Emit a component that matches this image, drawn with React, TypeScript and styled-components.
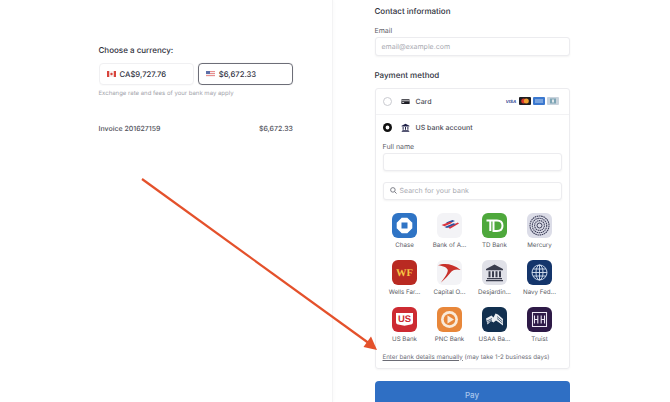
import React from "react";
import styled, { createGlobalStyle } from "styled-components";

const Global = createGlobalStyle`
  html, body { margin: 0; padding: 0; background: #fff; }
  body { font-family: Inter, "Liberation Sans", sans-serif; color: #30313d; text-rendering: geometricPrecision; }
  #root { width: 670px; height: 402px; overflow: hidden; }
`;

const Page = styled.div`
  position: relative;
  display: flex;
  width: 670px;
  height: 402px;
  overflow: hidden;
`;
const LeftPanel = styled.section`
  width: 333px;
  box-sizing: border-box;
  padding: 44px 39px 0 98.5px;
  border-right: 1px solid #f3f3f4;
  box-shadow: 1px 0 3px rgba(0, 0, 0, 0.025);
`;
const RightPanel = styled.section`
  width: 195px;
  margin-left: 41.5px;
  padding-top: 5px;
`;
const Heading = styled.h2`
  margin: 0;
  font-size: 8px;
  line-height: 12px;
  font-weight: 500;
  color: #30313d;
`;
const CurrencyRow = styled.div`
  display: flex;
  gap: 4px;
  margin-top: 7px;
`;
const CurrencyButton = styled.div<{ $active?: boolean }>`
  flex: 1;
  height: 22px;
  box-sizing: border-box;
  display: flex;
  align-items: center;
  gap: 4px;
  padding-left: 7px;
  border-radius: 4px;
  font-size: 7.7px;
  font-weight: 500;
  color: #30313d;
  border: 1px solid ${p => (p.$active ? "#6d6e78" : "#f0f0f2")};
  box-shadow: ${p => (p.$active ? "0 0 1px rgba(0,0,0,.2)" : "0 1px 1px rgba(0,0,0,.02)")};
`;
const Flag = styled.svg`
  width: 9px;
  height: 6px;
  flex: none;
`;
const Note = styled.p`
  margin: 4px 0 0;
  font-size: 6px;
  line-height: 10px;
  color: #a3a4ab;
`;
const InvoiceRow = styled.div`
  display: flex;
  justify-content: space-between;
  margin-top: 25px;
  font-size: 7px;
  line-height: 10px;
  font-weight: 500;
  color: #4f5059;
`;
const FieldLabel = styled.label`
  display: block;
  font-size: 7px;
  line-height: 10px;
  color: #5d5e68;
`;
const Input = styled.div`
  height: 18.5px;
  box-sizing: border-box;
  display: flex;
  align-items: center;
  gap: 3px;
  padding-left: 6px;
  margin-top: 1px;
  border: 1px solid #ececef;
  border-radius: 3px;
  background: #fff;
  box-shadow: 0 1px 2px rgba(0, 0, 0, 0.05);
  font-size: 7px;
  color: #a9aab1;
`;
const EmailGroup = styled.div`
  margin-top: 9px;
`;
const PaymentHeading = styled(Heading)`
  margin-top: 13.5px;
`;
const PaymentBox = styled.div`
  margin-top: 7px;
  height: 281px;
  box-sizing: border-box;
  border: 1px solid #ececef;
  border-radius: 3px;
  box-shadow: 0 1px 2px rgba(0, 0, 0, 0.04);
`;
const MethodRow = styled.div<{ $divided?: boolean }>`
  height: 25.5px;
  box-sizing: border-box;
  display: flex;
  align-items: center;
  padding: 0 10px 0 7px;
  font-size: 7px;
  font-weight: 500;
  color: #4a4b55;
  border-bottom: ${p => (p.$divided ? "1px solid #f2f2f4" : "none")};
`;
const Radio = styled.span<{ $on?: boolean }>`
  width: 9px;
  height: 9px;
  box-sizing: border-box;
  border-radius: 50%;
  flex: none;
  background: #fff;
  border: ${p => (p.$on ? "0" : "1px solid #c9cad0")};
  ${p => (p.$on ? "box-shadow: inset 0 0 0 2.6px #111;" : "")}
`;
const MethodIcon = styled.svg`
  width: 9px;
  height: 9px;
  margin-left: 9px;
  margin-right: 6px;
  flex: none;
`;
const CardLogos = styled.div`
  margin-left: auto;
  display: flex;
  gap: 2px;
  align-items: center;
`;
const CardLogo = styled.svg`
  width: 12px;
  height: 8px;
  display: block;
`;
const BankBody = styled.div`
  padding: 1.5px 7px 0;
`;
const SearchGroup = styled.div`
  margin-top: 10.5px;
`;
const Grid = styled.div`
  display: grid;
  grid-template-columns: repeat(4, 45px);
  justify-content: center;
  row-gap: 10px;
  margin-top: 13px;
`;
const Bank = styled.div`
  display: flex;
  flex-direction: column;
  align-items: center;
  gap: 3px;
  font-size: 6.2px;
  line-height: 9px;
  color: #5a5b64;
  white-space: nowrap;
`;
const Logo = styled.svg`
  width: 25px;
  height: 25px;
  display: block;
  border-radius: 6px;
`;
const Manual = styled.p`
  margin: 8.5px 0 0;
  font-size: 6.2px;
  line-height: 9px;
  color: #6b6c75;
  white-space: nowrap;
`;
const ManualLink = styled.span`
  text-decoration: underline;
`;
const PayButton = styled.button`
  display: block;
  width: 195px;
  height: 40px;
  margin-top: 12px;
  padding: 0 0 12px;
  border: 0;
  border-radius: 4px;
  background: #2f6fc4;
  color: #a9c6ec;
  font: 500 8px Inter, sans-serif;
`;
const ArrowOverlay = styled.svg`
  position: absolute;
  left: 0;
  top: 0;
  width: 670px;
  height: 402px;
  pointer-events: none;
`;

const banks: { name: string; art: React.ReactNode }[] = [
  {
    name: "Chase",
    art: (
      <>
        <rect width="25" height="25" fill="#2f74c5" />
        <path d="M9.500 4.700h5.800l5 5v.6h-10.800z M20.300 9.500v5.800l-5 5h-.6v-10.800z M15.500 20.300h-5.800l-5-5v-.6h10.800z M4.700 15.500v-5.800l5-5h.6v10.800z" fill="#fff" />
        <rect x="9.500" y="9.500" width="6" height="6" fill="#2f74c5" />
      </>
    ),
  },
  {
    name: "Bank of A...",
    art: (
      <>
        <rect width="25" height="25" fill="#f3f3f6" />
        <path d="M9 9.500 L15.500 7 L18 8 L11.500 10.800z" fill="#2c4f9e" />
        <path d="M4.500 12 L13 8.800 L15.500 9.800 L7.500 13.200z M11 14.500 L20.800 9.600 L22 10.400 L13 15.800z" fill="#d8343f" />
        <path d="M7.500 14 L16.500 10.200 L19 11 L10 15z" fill="#2c4f9e" />
      </>
    ),
  },
  {
    name: "TD Bank",
    art: (
      <>
        <rect width="25" height="25" fill="#4ea83c" />
        <path d="M4.500 7.500H15C19 7.500 20.500 10 20.500 12.800S19 18 15 18H11.500V7.500M8.300 7.500V18" fill="none" stroke="#fff" strokeWidth="2" />
      </>
    ),
  },
  {
    name: "Mercury",
    art: (
      <>
        <rect width="25" height="25" fill="#dcdde8" />
        <g fill="none" stroke="#3d3f5a">
          <circle cx="12.500" cy="12.500" r="9.500" strokeWidth="1.100" strokeDasharray="1.600 .6" />
          <circle cx="12.500" cy="12.500" r="7.200" strokeWidth="1.100" strokeDasharray="1.500 .6" />
          <circle cx="12.500" cy="12.500" r="4.900" strokeWidth="1.100" strokeDasharray="1.400 .6" />
          <circle cx="12.500" cy="12.500" r="2.500" strokeWidth="1" />
        </g>
      </>
    ),
  },
  {
    name: "Wells Far...",
    art: (
      <>
        <rect width="25" height="25" fill="#b92a22" />
        <text x="12.500" y="16" textAnchor="middle" fontFamily="Liberation Serif, serif" fontWeight="700" fontSize="10.500" fill="#f6c544">WF</text>
      </>
    ),
  },
  {
    name: "Capital O...",
    art: (
      <>
        <rect width="25" height="25" fill="#f3f3f6" />
        <path d="M1 5.300 C7 3 16 3.500 23.700 10 C20 8.800 16.500 9.500 14.500 11.500 C11.500 15 8 19.500 3.700 22.700 C7.500 18 10.500 13.500 10.800 10.500 C11 8 6 5.800 1 5.300z" fill="#c8312b" />
      </>
    ),
  },
  {
    name: "Desjardin...",
    art: (
      <>
        <rect width="25" height="25" fill="#e0e1e8" />
        <path d="M12.500 4.500 L21 9 V10.200 H4 V9z M5 18h15v1.300H5z M4 20h17v1.300H4z M6.500 11.200h2v6h-2z M10 11.200h2v6h-2z M13.500 11.200h2v6h-2z M17 11.200h2v6h-2z" fill="#3a3d4d" />
      </>
    ),
  },
  {
    name: "Navy Fed...",
    art: (
      <>
        <rect width="25" height="25" fill="#14356b" />
        <g fill="none" stroke="#d7e2f2" strokeWidth=".9">
          <circle cx="12.500" cy="12.500" r="7.500" />
          <ellipse cx="12.500" cy="12.500" rx="3.500" ry="7.500" />
          <path d="M12.500 5v15M5 12.500h15M6 9h13M6 16h13" />
        </g>
      </>
    ),
  },
  {
    name: "US Bank",
    art: (
      <>
        <rect width="25" height="25" fill="#cd2b32" />
        <path d="M4 6h17v9c0 1.500-.8 2.200-2.200 2.400l-6.300 1.400l-6.300-1.400C4.800 17.200 4 16.500 4 15z" fill="#fff" />
        <text x="12.500" y="15.300" textAnchor="middle" fontFamily="Liberation Sans, sans-serif" fontWeight="700" fontSize="9.500" fill="#cd2b32">US</text>
      </>
    ),
  },
  {
    name: "PNC Bank",
    art: (
      <>
        <rect width="25" height="25" fill="#e8873a" />
        <circle cx="12.500" cy="12.500" r="8.500" fill="#f9ead9" />
        <circle cx="12.500" cy="12.500" r="5.800" fill="#e8873a" />
        <path d="M10.500 8.500 L17 12.500 L10.500 16.500z" fill="#f9ead9" />
      </>
    ),
  },
  {
    name: "USAA Ba...",
    art: (
      <>
        <rect width="25" height="25" fill="#12304f" />
        <path d="M4 11.500 L9.500 8.500 L11.500 10.500 L13.500 6.500 L16 7.500 L21 12 V18.500 L17 15.500 L14 13.500 L11.500 15.500 L9 14 L5.500 17.500z" fill="#e9edf2" />
        <path d="M5 14 L10 11.500 M5.500 15.500 L10 13 M15 9.500 L20.500 14 M15 11.500 L20.500 16" stroke="#12304f" strokeWidth=".7" />
      </>
    ),
  },
  {
    name: "Truist",
    art: (
      <>
        <rect width="25" height="25" fill="#2e1a47" />
        <g fill="none" stroke="#ece7f3" strokeWidth="1.100">
          <path d="M5.500 5.500h14v14h-14z" />
          <path d="M10.800 8.500v8M14.200 8.500v8M7.500 8.500v8M17.500 8.500v8M7.500 12.500h3.300M14.200 12.500h3.300" />
        </g>
      </>
    ),
  },
];

export default function App() {
  return (
    <Page>
      <Global />
      <LeftPanel>
        <Heading>Choose a currency:</Heading>
        <CurrencyRow>
          <CurrencyButton>
            <Flag viewBox="0 0 9 6">
              <rect width="9" height="6" fill="#d8443c" />
              <rect x="2.200" width="4.600" height="6" fill="#f7f1f0" />
              <circle cx="4.500" cy="3" r="1.200" fill="#d8443c" />
            </Flag>
            CA$9,727.76
          </CurrencyButton>
          <CurrencyButton $active>
            <Flag viewBox="0 0 9 6">
              <rect width="9" height="6" fill="#e88f8f" />
              <path d="M0 1h9v1H0zM0 3h9v1H0zM0 5h9v1H0z" fill="#f5eeee" />
              <rect width="4" height="3" fill="#5d6fa8" />
            </Flag>
            $6,672.33
          </CurrencyButton>
        </CurrencyRow>
        <Note>Exchange rate and fees of your bank may apply</Note>
        <InvoiceRow>
          <span>Invoice 201627159</span>
          <span>$6,672.33</span>
        </InvoiceRow>
      </LeftPanel>
      <RightPanel>
        <Heading>Contact information</Heading>
        <EmailGroup>
          <FieldLabel>Email</FieldLabel>
          <Input>email@example.com</Input>
        </EmailGroup>
        <PaymentHeading>Payment method</PaymentHeading>
        <PaymentBox>
          <MethodRow $divided>
            <Radio />
            <MethodIcon viewBox="0 0 10 10">
              <path d="M1 2.500h8a.6.6 0 0 1 .6.6v4a.6.6 0 0 1-.6.6H1a.6.6 0 0 1-.6-.6v-4a.6.6 0 0 1 .6-.6z" fill="#1c1c24" />
              <rect x=".4" y="3.800" width="9.200" height=".9" fill="#fff" />
              <rect x="1.300" y="5.800" width="2.200" height=".8" fill="#fff" />
            </MethodIcon>
            Card
            <CardLogos>
              <CardLogo viewBox="0 0 12 8">
                <text x="6" y="6" textAnchor="middle" fontFamily="Liberation Sans, sans-serif" fontWeight="700" fontStyle="italic" fontSize="4.500" fill="#2a3f8f">VISA</text>
              </CardLogo>
              <CardLogo viewBox="0 0 12 8">
                <rect width="12" height="8" rx="1" fill="#1e1e22" />
                <circle cx="4.700" cy="4" r="2.500" fill="#d9362b" />
                <circle cx="7.300" cy="4" r="2.500" fill="#f0a030" />
              </CardLogo>
              <CardLogo viewBox="0 0 12 8">
                <rect width="12" height="8" rx="1" fill="#3b78cf" />
                <path d="M2 3h8M2 5h8" stroke="#b7d0f0" strokeWidth="1" />
              </CardLogo>
              <CardLogo viewBox="0 0 12 8">
                <rect width="12" height="8" rx="1" fill="#c9d3dc" />
                <rect x="3" y="1.500" width="6" height="5" fill="#7ea5b5" />
                <rect x="5" y="2.500" width="2" height="3" fill="#e2e8ec" />
              </CardLogo>
            </CardLogos>
          </MethodRow>
          <MethodRow>
            <Radio $on />
            <MethodIcon viewBox="0 0 10 10">
              <path d="M5 .8 9.300 3v.9H.7V3zM1.500 8h7v.8h-7zM.8 9h8.400v.8H.8zM1.800 4.500h1.100V7.500H1.800zM4.450 4.500h1.100V7.500H4.450zM7.100 4.500h1.100V7.500H7.100z" fill="#1f2147" />
            </MethodIcon>
            US bank account
          </MethodRow>
          <BankBody>
            <div>
              <FieldLabel>Full name</FieldLabel>
              <Input />
            </div>
            <SearchGroup>
              <Input>
                <svg width="7" height="7" viewBox="0 0 8 8" fill="none" stroke="#6d6e78" strokeWidth="1">
                  <circle cx="3.300" cy="3.300" r="2.600" />
                  <path d="M5.300 5.300 7.500 7.500" />
                </svg>
                Search for your bank
              </Input>
            </SearchGroup>
            <Grid>
              {banks.map(b => (
                <Bank key={b.name}>
                  <Logo viewBox="0 0 25 25">{b.art}</Logo>
                  {b.name}
                </Bank>
              ))}
            </Grid>
            <Manual>
              <ManualLink>Enter bank details manually</ManualLink> (may take 1-2 business days)
            </Manual>
          </BankBody>
        </PaymentBox>
        <PayButton>Pay</PayButton>
      </RightPanel>
      <ArrowOverlay viewBox="0 0 670 402">
        <path d="M142 179 L370 344" stroke="#e4512b" strokeWidth="2.200" />
        <path d="M377 350 L363.500 347 L371 336.500z" fill="#e4512b" />
      </ArrowOverlay>
    </Page>
  );
}
